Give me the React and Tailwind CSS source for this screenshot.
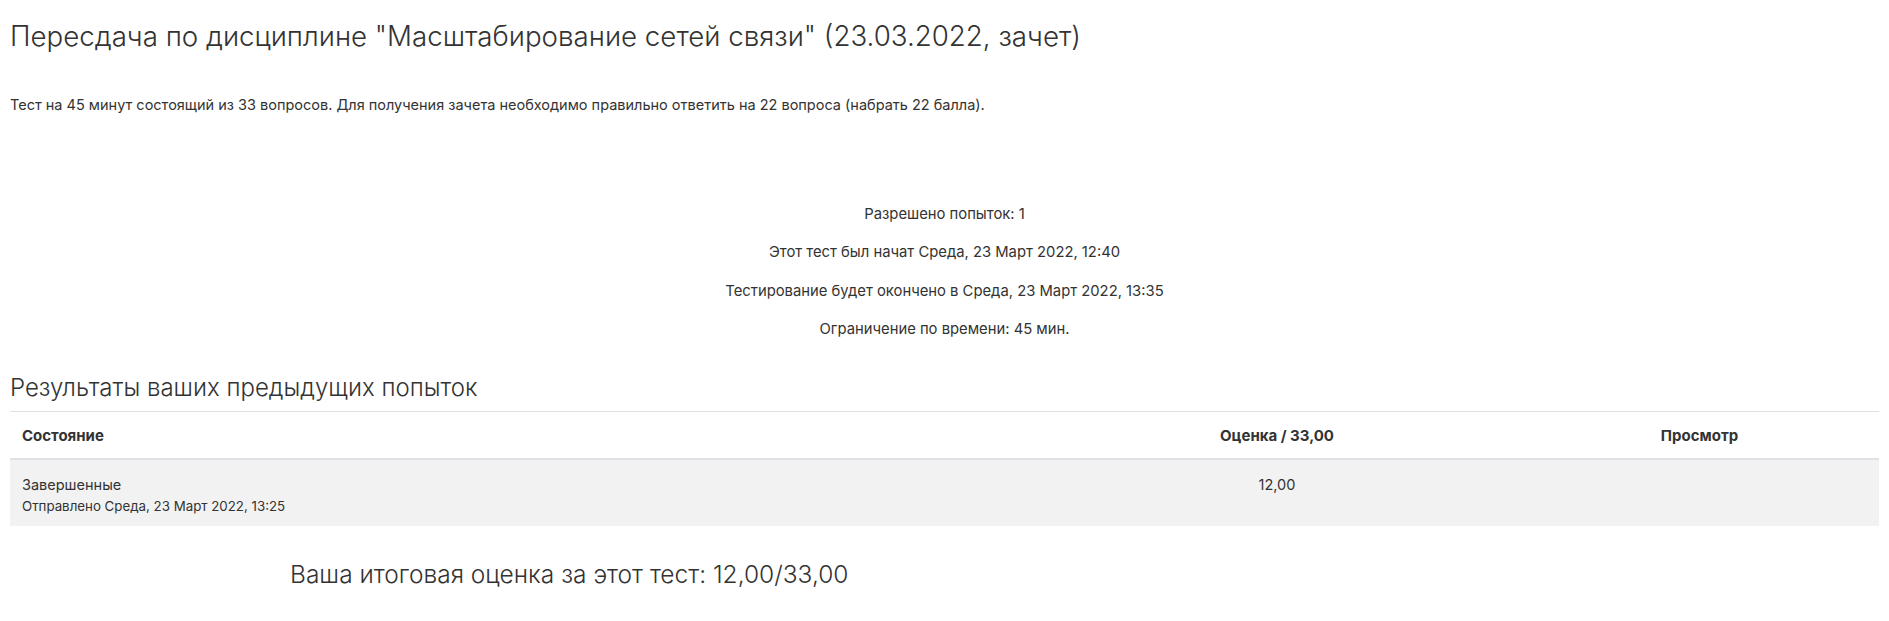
import React from 'react';

const infoLines = [
  'Разрешено попыток: 1',
  'Этот тест был начат Среда, 23 Март 2022, 12:40',
  'Тестирование будет окончено в Среда, 23 Март 2022, 13:35',
  'Ограничение по времени: 45 мин.',
];

export default function App() {
  return (
    <div className="w-[1889px] h-[621px] bg-white px-[10px] text-[#333] font-['Inter','Noto_Sans',sans-serif] overflow-hidden">
      <h2 className="pt-[20px] text-[27.7px] leading-[32px] font-light">
        Пересдача по дисциплине "Масштабирование сетей связи" (23.03.2022, зачет)
      </h2>

      <p className="mt-[43px] text-[14.5px] leading-[20px]">
        Тест на 45 минут состоящий из 33 вопросов. Для получения зачета необходимо правильно ответить на 22 вопроса (набрать 22 балла).
      </p>

      <div className="mt-[89px] flex flex-col items-center gap-[18.3px] text-[14.8px] leading-[20px]">
        {infoLines.map((line) => (
          <p key={line}>{line}</p>
        ))}
      </div>

      <h3 className="mt-[33px] text-[24px] leading-[32px] font-light">
        Результаты ваших предыдущих попыток
      </h3>

      <div className="mt-[7px] border-t border-[#dee2e6]">
        <div className="grid grid-cols-[1024px_486px_1fr] h-[48px] pt-[2px] items-center border-b-2 border-[#dee2e6] text-[15px] font-bold">
          <div className="px-[12px]">Состояние</div>
          <div className="text-center">Оценка / 33,00</div>
          <div className="text-center">Просмотр</div>
        </div>
        <div className="grid grid-cols-[1024px_486px_1fr] bg-[#f2f2f2] pt-[15px] pb-[10px]">
          <div className="px-[12px]">
            <div className="text-[14.5px] leading-[20px]">Завершенные</div>
            <div className="text-[13.3px] leading-[20px] mt-[1px]">Отправлено Среда, 23 Март 2022, 13:25</div>
          </div>
          <div className="text-center text-[14.5px] leading-[20px]">12,00</div>
          <div />
        </div>
      </div>

      <h3 className="mt-[32px] pl-[280px] text-[24.5px] leading-[32px] font-light">
        Ваша итоговая оценка за этот тест: 12,00/33,00
      </h3>
    </div>
  );
}
